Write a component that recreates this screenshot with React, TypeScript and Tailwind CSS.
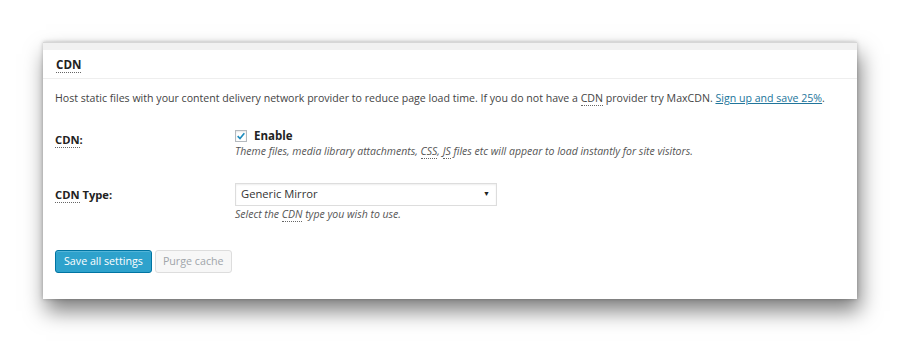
const font = { fontFamily: '"Open Sans", "Noto Sans", sans-serif' };

function Abbr({ children }: { children: React.ReactNode }) {
  return <span className="border-b border-dotted border-[#666]">{children}</span>;
}

export default function App() {
  return (
    <div className="w-[900px] h-[342px] bg-white overflow-hidden" style={font}>
      <div className="ml-[43px] mt-[42px] w-[814px] h-[257px] flex flex-col shadow-[3px_12px_20px_rgba(0,0,0,0.5),0_0_4px_rgba(0,0,0,0.25)]">
        <div className="h-[8px] bg-[#f1f1f1] border-t border-[#d6d6d6]" />
        <div className="flex-1 bg-white text-[11.2px] text-[#444]">
          <div className="h-[29px] border-b border-[#eee] pl-[13px] flex items-center">
            <h3 className="text-[11.6px] font-bold text-[#222] leading-none pt-[2px]">
              <Abbr>CDN</Abbr>
            </h3>
          </div>
          <p className="pl-[12px] mt-[11px] leading-[16px] text-[10.6px]">
            Host static files with your content delivery network provider to reduce page load time. If you do not have a <Abbr>CDN</Abbr> provider try MaxCDN.{' '}
            <a className="text-[#21759b] underline">Sign up and save 25%</a>.
          </p>
          <div className="flex pl-[12px] mt-[21px]">
            <div className="w-[180px] pt-[5px] font-bold text-[#222]">
              <Abbr>CDN</Abbr>:
            </div>
            <div>
              <label className="flex items-center gap-[7px] font-bold text-[#222] h-[17px] text-[11.5px]">
                <span className="w-[12px] h-[12px] border border-[#b4b9be] bg-white flex items-center justify-center shadow-[inset_0_1px_2px_rgba(0,0,0,0.1)]">
                  <svg width="10" height="10" viewBox="0 0 12 12">
                    <path d="M2 6.2 L4.8 9 L10 2.6" fill="none" stroke="#1e8cbe" strokeWidth="2" />
                  </svg>
                </span>
                Enable
              </label>
              <p className="italic text-[10.5px] text-[#555] leading-[14px]">
                Theme files, media library attachments, <Abbr>CSS</Abbr>, <Abbr>JS</Abbr> files etc will appear to load instantly for site visitors.
              </p>
            </div>
          </div>
          <div className="flex pl-[12px] mt-[25px]">
            <div className="w-[180px] pt-[4px] font-bold text-[#222]">
              <Abbr>CDN</Abbr> Type:
            </div>
            <div>
              <div className="w-[262px] h-[23px] border border-[#ddd] bg-white flex items-center justify-between pl-[5px] pr-[6px] text-[#333] shadow-[inset_0_1px_2px_rgba(0,0,0,0.07)]">
                <span>Generic Mirror</span>
                <span className="text-[7px] text-[#222]">▼</span>
              </div>
              <p className="italic text-[10.5px] text-[#555] leading-[14px] mt-[1px]">
                Select the <Abbr>CDN</Abbr> type you wish to use.
              </p>
            </div>
          </div>
          <div className="flex gap-[3px] pl-[12px] mt-[29px]">
            <button className="h-[23px] px-[8px] rounded-[3px] bg-[#2ea2cc] border border-[#0074a2] text-white text-[10.7px] shadow-[inset_0_1px_0_rgba(120,200,230,0.5)]">
              Save all settings
            </button>
            <button className="h-[23px] px-[7px] rounded-[3px] bg-[#f7f7f7] border border-[#ddd] text-[#a0a5aa] text-[10.7px]">
              Purge cache
            </button>
          </div>
        </div>
      </div>
    </div>
  );
}
